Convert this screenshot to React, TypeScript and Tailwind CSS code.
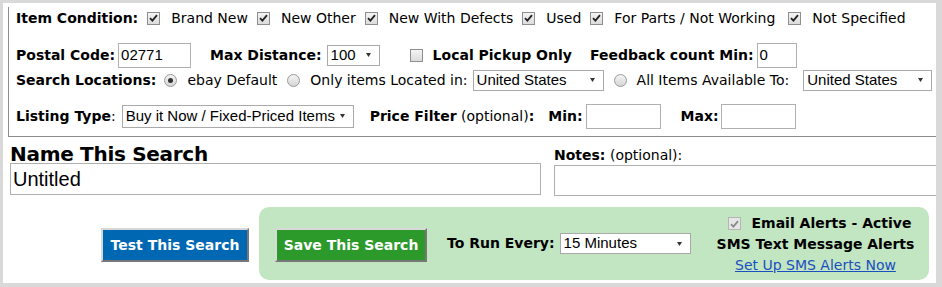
import React from "react";

const V = { fontFamily: '"DejaVu Sans", Verdana, sans-serif' };
const A = { fontFamily: '"Liberation Sans", Arial, sans-serif' };

function Check({ disabled = false, checked = true }: { disabled?: boolean; checked?: boolean }) {
  return (
    <span
      className={`flex h-[13px] w-[13px] shrink-0 items-center justify-center border ${
        disabled ? "border-[#b5b5b5] bg-[#e6e6e6]" : "border-[#8e8e8e] bg-gradient-to-b from-[#f4f4f4] to-[#dcdcdc]"
      }`}
    >
      {checked && (
        <svg width="9" height="8" viewBox="0 0 9 8">
          <path d="M1 4.2 L3.4 6.6 L8 1.2" fill="none" stroke={disabled ? "#8a8a8a" : "#222"} strokeWidth="1.8" />
        </svg>
      )}
    </span>
  );
}

function Radio({ on = false }: { on?: boolean }) {
  return (
    <span className="flex h-[13px] w-[13px] shrink-0 items-center justify-center rounded-full border border-[#9a9a9a] bg-gradient-to-b from-[#f4f4f4] to-[#d6d6d6]">
      {on && <span className="h-[5px] w-[5px] rounded-full bg-[#333]" />}
    </span>
  );
}

function Select({ text, w, h = "h-[21px]" }: { text: string; w: string; h?: string }) {
  return (
    <span
      className={`flex ${w} ${h} shrink-0 items-center justify-between border border-[#a9a9a9] bg-white pl-[3px] pr-[8px] text-[15px] text-black`}
      style={A}
    >
      <span>{text}</span>
      <svg width="5" height="4" viewBox="0 0 5 4">
        <path d="M0 0 L5 0 L2.5 4 Z" fill="#333" />
      </svg>
    </span>
  );
}

function TextBox({ value = "", cls }: { value?: string; cls: string }) {
  return (
    <span className={`flex shrink-0 items-center border border-[#b0b0b0] bg-white pl-[2px] text-black ${cls}`} style={A}>
      {value}
    </span>
  );
}

export default function App() {
  return (
    <div className="h-[287px] w-[942px] bg-[#d9d9d9] pl-[3px] pt-[3px] pr-[6px] pb-[4px]" style={V}>
      <div className="h-[280px] w-[933px] overflow-hidden bg-white text-[14px] text-black">
        {/* filter panel */}
        <div className="ml-[5px] border-b border-l border-[#8c8c8c] pl-[7px] pb-[7px]">
          <div className="mt-[4px] flex h-[22px] items-center">
            <b className="mr-[9px]">Item Condition:</b>
            <Check />
            <span className="ml-[11px] mr-[9px]">Brand New</span>
            <Check />
            <span className="ml-[11px] mr-[9px]">New Other</span>
            <Check />
            <span className="ml-[11px] mr-[9px]">New With Defects</span>
            <Check />
            <span className="ml-[11px] mr-[9px]">Used</span>
            <Check />
            <span className="ml-[11px] mr-[13px]">For Parts / Not Working</span>
            <Check />
            <span className="ml-[11px]">Not Specified</span>
          </div>
          <div className="mt-[13px] flex h-[26px] items-center">
            <b className="mr-[3px]">Postal Code:</b>
            <TextBox value="02771" cls="h-[25px] w-[73px] text-[15px]" />
            <b className="ml-[19px] mr-[5px]">Max Distance:</b>
            <Select text="100" w="w-[53px]" />
            <span className="ml-[30px]">
              <Check checked={false} />
            </span>
            <b className="ml-[10px]">Local Pickup Only</b>
            <b className="ml-[18px] mr-[3px]">Feedback count Min:</b>
            <TextBox value="0" cls="h-[25px] w-[40px] text-[15px]" />
          </div>
          <div className="mt-[1px] flex h-[22px] items-center">
            <b className="mr-[8px]">Search Locations:</b>
            <Radio on />
            <span className="ml-[10px] mr-[10px]">ebay Default</span>
            <Radio />
            <span className="ml-[10px] mr-[5px]">Only items Located in:</span>
            <Select text="United States" w="w-[131px]" />
            <span className="ml-[10px]">
              <Radio />
            </span>
            <span className="ml-[10px] mr-[14px]">All Items Available To:</span>
            <Select text="United States" w="w-[129px]" />
          </div>
          <div className="mt-[12px] flex h-[26px] items-center">
            <span className="mr-[6px]">
              <b>Listing Type</b>:
            </span>
            <Select text="Buy it Now / Fixed-Priced Items" w="w-[232px]" h="h-[23px]" />
            <span className="ml-[16px] mr-[14px]">
              <b>Price Filter</b> (optional)<b>:</b>
            </span>
            <b className="mr-[3px]">Min:</b>
            <TextBox cls="h-[25px] w-[75px]" />
            <b className="ml-[20px] mr-[2px]">Max:</b>
            <TextBox cls="h-[25px] w-[75px]" />
          </div>
        </div>

        {/* name / notes */}
        <div className="flex items-start">
          <div className="ml-[7px] mt-[7px] w-[531px]">
            <div className="h-[19px] text-[20px] font-bold leading-[20px] tracking-[-0.3px]">Name This Search</div>
            <TextBox value="Untitled" cls="h-[32px] w-[531px] text-[20px] border-[#a5a5a5]" />
          </div>
          <div className="ml-[13px] mt-[8px] flex-1">
            <div className="h-[20px] leading-[20px]">
              <b>Notes:</b> (optional):
            </div>
            <TextBox cls="h-[31px] w-full border-r-0 border-[#a5a5a5]" />
          </div>
        </div>

        {/* bottom */}
        <div className="mt-[11px] flex items-start">
          <button
            className="ml-[98px] mt-[21px] h-[34px] w-[148px] border-2 border-t-[#d8d8d8] border-l-[#d8d8d8] border-b-[#777] border-r-[#777] bg-[#0068b3] text-[14px] font-bold text-white"
            style={V}
          >
            Test This Search
          </button>
          <div className="ml-[10px] flex h-[73px] w-[670px] items-start rounded-[10px] bg-[#c2e5c2]">
            <button
              className="ml-[16px] mt-[21px] h-[34px] w-[152px] border-2 border-t-[#d8d8d8] border-l-[#d8d8d8] border-b-[#777] border-r-[#777] bg-[#2b9a2b] text-[14px] font-bold text-white"
              style={V}
            >
              Save This Search
            </button>
            <div className="mt-[26px] flex items-center">
              <b className="ml-[20px] mr-[5px]">To Run Every:</b>
              <Select text="15 Minutes" w="w-[131px]" />
            </div>
            <div className="ml-[26px] mt-[6px] flex flex-col items-center leading-[21px]">
              <div className="ml-[8px] flex items-center">
                <Check disabled />
                <b className="ml-[11px]">Email Alerts - Active</b>
              </div>
              <b>SMS Text Message Alerts</b>
              <a className="text-[#1a4fc0] underline" href="#">
                Set Up SMS Alerts Now
              </a>
            </div>
          </div>
        </div>
      </div>
    </div>
  );
}
